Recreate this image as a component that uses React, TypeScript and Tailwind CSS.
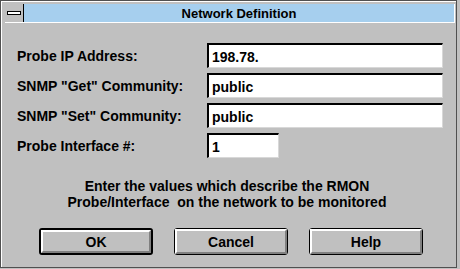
import React from "react";

function Field({ value, width }: { value: string; width: string }) {
  return (
    <div
      className={`${width} h-[25px] bg-white border-t-2 border-l-2 border-black border-b border-r border-b-[#d8d8d8] border-r-[#d8d8d8] flex items-center pl-[3px] pt-[1px]`}
    >
      {value}
    </div>
  );
}

function Row({ label, value, width }: { label: string; value: string; width: string }) {
  return (
    <div className="flex items-center h-[25px]">
      <div className="w-[190px]">{label}</div>
      <Field value={value} width={width} />
    </div>
  );
}

function Btn({ label, def }: { label: string; def?: boolean }) {
  return (
    <div
      className={`w-[114px] h-[27px] rounded-[3px] border-black ${def ? "border-2" : "border"}`}
    >
      <div className="h-full border-t-2 border-l-2 border-white border-b-2 border-r-2 border-b-[#808080] border-r-[#808080] flex items-center justify-center">
        {label}
      </div>
    </div>
  );
}

export default function App() {
  return (
    <div className="w-[460px] h-[269px] bg-[#c0c0c0] font-['Liberation_Sans',Arial,sans-serif] font-bold text-[14px] leading-none text-black">
      <div className="w-[457px] h-[268px] border border-[#505050]">
        <div className="h-full border-l border-t border-white flex flex-col">
          <div className="mt-[2px] ml-[3px] w-[450px] h-[19px] flex border-b border-white">
            <div className="w-[19px] h-full border-r border-black flex items-center justify-center">
              <div className="w-[14px] h-[4px] bg-white border border-black" />
            </div>
            <div className="flex-1 h-full bg-[#a6cfee] border-r border-white flex items-center justify-center text-[13px]">
              Network Definition
            </div>
          </div>

          <div className="mt-[20px] pl-[15px] flex flex-col gap-[5px]">
            <Row label="Probe IP Address:" value="198.78." width="w-[236px]" />
            <Row label={'SNMP "Get" Community:'} value="public" width="w-[236px]" />
            <Row label={'SNMP "Set" Community:'} value="public" width="w-[236px]" />
            <Row label="Probe Interface #:" value="1" width="w-[72px]" />
          </div>

          <div className="mt-[20px] pr-[4px] text-center leading-[16px] whitespace-pre">
            <div>Enter the values which describe the RMON</div>
            <div>Probe/Interface  on the network to be monitored</div>
          </div>

          <div className="mt-[18px] pl-[37px] flex gap-[21px]">
            <Btn label="OK" def />
            <Btn label="Cancel" />
            <Btn label="Help" />
          </div>
        </div>
      </div>
    </div>
  );
}
